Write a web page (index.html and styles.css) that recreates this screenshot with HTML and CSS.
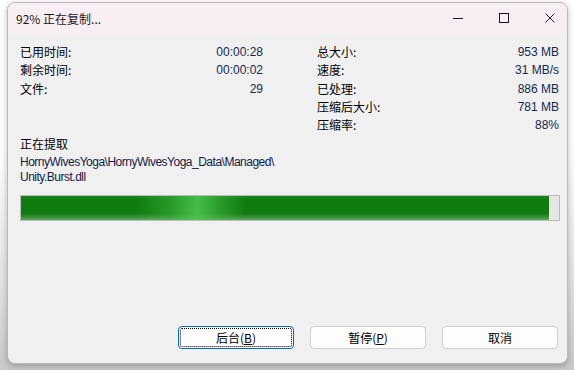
FILE: index.html
```html
<!DOCTYPE html>
<html lang="zh-CN">
<head>
  <meta charset="UTF-8">
  <title>92% 正在复制...</title>
  <link rel="stylesheet" href="styles.css">
</head>
<body>

  <div class="window">
    <!-- Title bar -->
    <div class="titlebar">
      <span class="title">92% 正在复制...</span>
      <div class="controls">
        <svg class="ctl" width="46" height="30" viewBox="0 0 46 30"><path d="M18 15.5h10" stroke="#1a1a1a" stroke-width="1"/></svg>
        <svg class="ctl" width="46" height="30" viewBox="0 0 46 30"><rect x="18.5" y="10.5" width="9" height="9" fill="none" stroke="#1a1a1a" stroke-width="1"/></svg>
        <svg class="ctl" width="40" height="30" viewBox="0 0 40 30"><path d="M18.5 10.5l9 9M27.5 10.5l-9 9" stroke="#1a1a1a" stroke-width="1"/></svg>
      </div>
    </div>

    <div class="content">
      <!-- Stats -->
      <div class="stats">
        <div class="stat-list">
          <div class="row"><span class="label">已用时间:</span><span class="value">00:00:28</span></div>
          <div class="row"><span class="label">剩余时间:</span><span class="value">00:00:02</span></div>
          <div class="row"><span class="label">文件:</span><span class="value">29</span></div>
        </div>
        <div class="stat-list">
          <div class="row"><span class="label">总大小:</span><span class="value">953 MB</span></div>
          <div class="row"><span class="label">速度:</span><span class="value">31 MB/s</span></div>
          <div class="row"><span class="label">已处理:</span><span class="value">886 MB</span></div>
          <div class="row"><span class="label">压缩后大小:</span><span class="value">781 MB</span></div>
          <div class="row"><span class="label">压缩率:</span><span class="value">88%</span></div>
        </div>
      </div>

      <div class="action">正在提取</div>
      <div class="path">HornyWivesYoga\HornyWivesYoga_Data\Managed\<br>Unity.Burst.dll</div>

      <div class="progress">
        <div class="progress-fill" style="width: 98.1%"></div>
      </div>

      <!-- Buttons -->
      <div class="buttons">
        <button type="button" class="btn btn-default"><span class="focus">后台(<u>B</u>)</span></button>
        <button type="button" class="btn">暂停(<u>P</u>)</button>
        <button type="button" class="btn">取消</button>
      </div>
    </div>
  </div>

</body>
</html>
```

FILE: styles.css
```css
html, body {
  margin: 0;
  padding: 0;
  height: 100%;
}

body {
  background: linear-gradient(#ffffff 0, #ffffff 40%, #e4e4e4 75%, #c9c9c9 100%);
  font-family: "Liberation Sans", "Noto Sans CJK SC", sans-serif;
  font-size: 12px;
  color: #000;
  overflow: hidden;
}

.window {
  box-sizing: border-box;
  width: 561px;
  height: 362px;
  margin: 2px 0 0 7px;
  display: flex;
  flex-direction: column;
  background-color: #f0f0f0;
  border: 1px solid #b9b9b9;
  border-radius: 8px;
  overflow: hidden;
  box-shadow: 0 2px 6px rgba(0, 0, 0, 0.25);
}

.titlebar {
  height: 30px;
  display: flex;
  align-items: center;
  justify-content: space-between;
  background-color: #f8eef4;
  flex-shrink: 0;
}

.title {
  padding-left: 8px;
  font-size: 12px;
  font-family: "Noto Sans CJK SC", sans-serif;
  color: #1a1a1a;
}

.controls {
  display: flex;
  padding-right: 0;
}

.ctl {
  display: block;
}

.content {
  flex: 1;
  display: flex;
  flex-direction: column;
  padding: 10px 9px 14px 12px;
}

.stats {
  display: grid;
  grid-template-columns: 243px 242px;
  column-gap: 54px;
}

.row {
  display: flex;
  justify-content: space-between;
  height: 18.3px;
  line-height: 18.3px;
}

.label {
  font-family: "Noto Sans CJK SC", sans-serif;
  font-size: 12px;
}

.value {
  color: #142850;
}

.action {
  font-family: "Noto Sans CJK SC", sans-serif;
  line-height: 18px;
  margin-top: 1px;
}

.path {
  margin-top: 2px;
  line-height: 15px;
  color: #10204a;
  letter-spacing: -0.5px;
}

.progress {
  box-sizing: border-box;
  width: 540px;
  height: 26px;
  margin-top: 10px;
  border: 1px solid #bcbcbc;
  background-color: #e6e6e6;
}

.progress-fill {
  height: 100%;
  background:
    linear-gradient(90deg, rgba(70, 190, 70, 0) 116px, rgba(70, 190, 70, 0.45) 150px, rgba(80, 200, 80, 0.85) 176px, rgba(70, 190, 70, 0.45) 200px, rgba(70, 190, 70, 0) 224px),
    linear-gradient(#1d861d 0, #107c10 12%, #107c10 72%, #2a8a2a 84%, #5fa55f 100%);
}

.buttons {
  margin-top: auto;
  display: flex;
  justify-content: flex-end;
  gap: 16px;
}

.btn {
  box-sizing: border-box;
  width: 116px;
  height: 23px;
  padding: 0;
  background-color: #fdfdfd;
  border: 1px solid #d0d0d0;
  border-radius: 4px;
  font-family: "Noto Sans CJK SC", sans-serif;
  font-size: 12px;
  color: #000;
  display: flex;
  align-items: center;
  justify-content: center;
}

.btn u {
  text-decoration: underline;
}

.btn-default {
  border: 1px solid #0067c0;
  padding: 1px;
}

.focus {
  flex: 1;
  align-self: stretch;
  display: flex;
  align-items: center;
  justify-content: center;
  border: 1px dotted #000;
  border-radius: 2px;
}
```
